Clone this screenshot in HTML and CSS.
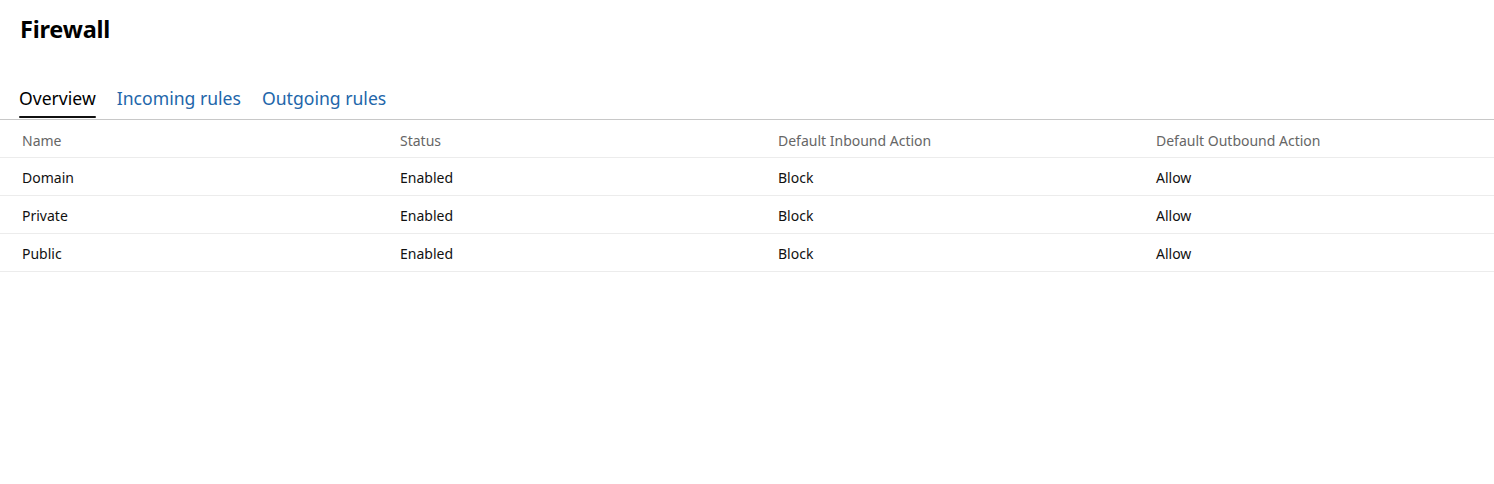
FILE: index.html
```html
<!DOCTYPE html>
<html>
<head>
<meta charset="utf-8">
<link rel="stylesheet" href="styles.css">
</head>
<body>
<div class="page">
  <h1 class="title">Firewall</h1>
  <nav class="tabs">
    <a class="tab active">Overview</a>
    <a class="tab">Incoming rules</a>
    <a class="tab">Outgoing rules</a>
  </nav>
  <div class="table">
    <div class="row head">
      <div class="cell">Name</div>
      <div class="cell">Status</div>
      <div class="cell">Default Inbound Action</div>
      <div class="cell">Default Outbound Action</div>
    </div>
    <div class="row">
      <div class="cell">Domain</div>
      <div class="cell">Enabled</div>
      <div class="cell">Block</div>
      <div class="cell">Allow</div>
    </div>
    <div class="row">
      <div class="cell">Private</div>
      <div class="cell">Enabled</div>
      <div class="cell">Block</div>
      <div class="cell">Allow</div>
    </div>
    <div class="row">
      <div class="cell">Public</div>
      <div class="cell">Enabled</div>
      <div class="cell">Block</div>
      <div class="cell">Allow</div>
    </div>
  </div>
</div>
</body>
</html>
```
FILE: styles.css
```css
* { box-sizing: border-box; }
html, body { margin: 0; padding: 0; background: #fff; }
body {
  font-family: "Noto Sans", "Open Sans", sans-serif;
  color: #000;
  overflow: hidden;
}
.page { width: 1494px; }
.title {
  margin: 0;
  padding: 13px 0 0 20px;
  height: 48px;
  font-size: 23.5px;
  font-weight: 700;
  line-height: 32px;
  letter-spacing: -0.2px;
}
.tabs {
  display: flex;
  gap: 21px;
  padding: 30px 0 0 19px;
  border-bottom: 1px solid #c8c8c8;
}
.tab {
  font-size: 17.6px;
  line-height: 24px;
  height: 41px;
  padding-top: 8px;
  color: #2266aa;
  position: relative;
}
.tab.active { color: #000; }
.tab.active::after {
  content: "";
  position: absolute;
  left: 0; right: 0; bottom: 1px;
  height: 2px;
  border-radius: 1px;
  background: #111;
}
.row {
  display: grid;
  grid-template-columns: 378px 378px 378px 1fr;
  padding: 1px 0 0 22px;
  height: 38px;
  align-items: center;
  border-bottom: 1px solid #ececec;
  font-size: 14px;
  color: #111;
}
.row.head { padding-top: 3px; color: #666; }
.cell { white-space: nowrap; }
```
